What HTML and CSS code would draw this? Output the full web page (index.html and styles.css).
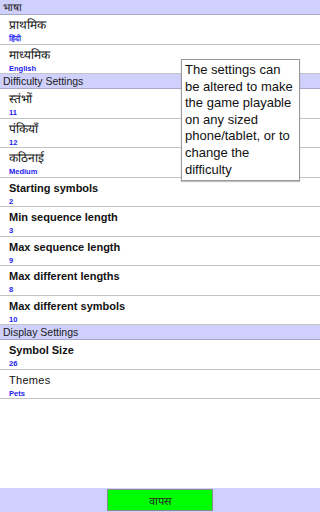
FILE: index.html
```html
<!DOCTYPE html>
<html>
<head>
<meta charset="utf-8">
<link rel="stylesheet" href="styles.css">
</head>
<body>
<div class="screen">
  <div class="list">
    <div class="header">भाषा</div>
    <div class="row"><div class="title dev">प्राथमिक</div><div class="value">हिंदी</div></div>
    <div class="row"><div class="title dev">माध्यमिक</div><div class="value">English</div></div>
    <div class="header">Difficulty Settings</div>
    <div class="row"><div class="title dev">स्तंभों</div><div class="value">11</div></div>
    <div class="row"><div class="title dev">पंकियाँ</div><div class="value">12</div></div>
    <div class="row"><div class="title dev">कठिनाई</div><div class="value">Medium</div></div>
    <div class="row"><div class="title">Starting symbols</div><div class="value">2</div></div>
    <div class="row"><div class="title">Min sequence length</div><div class="value">3</div></div>
    <div class="row"><div class="title">Max sequence length</div><div class="value">9</div></div>
    <div class="row"><div class="title">Max different lengths</div><div class="value">8</div></div>
    <div class="row"><div class="title">Max different symbols</div><div class="value">10</div></div>
    <div class="header">Display Settings</div>
    <div class="row"><div class="title">Symbol Size</div><div class="value">26</div></div>
    <div class="row"><div class="title plain">Themes</div><div class="value">Pets</div></div>
  </div>
  <div class="bottom">
    <button class="back">वापस</button>
  </div>
  <div class="tooltip">The settings can be altered to make the game playable on any sized phone/tablet, or to change the difficulty</div>
</div>
</body>
</html>
```
FILE: styles.css
```css
html, body {
  margin: 0;
  padding: 0;
  background: #ffffff;
}
.screen {
  position: relative;
  width: 320px;
  height: 512px;
  display: flex;
  flex-direction: column;
  font-family: "Liberation Sans", Arial, sans-serif;
  overflow: hidden;
}
.list {
  flex: 1;
  display: flex;
  flex-direction: column;
}
.header {
  height: 14px;
  line-height: 14px;
  background: #d0d0fc;
  border-bottom: 1px solid #a8a8c8;
  font-size: 10.5px;
  color: #1a1a1a;
  padding-left: 3px;
}
.row {
  height: 28.5px;
  box-sizing: content-box;
  border-bottom: 1px solid #c4c4c4;
  padding-left: 9px;
  display: flex;
  flex-direction: column;
}
.title {
  font-size: 11px;
  font-weight: bold;
  line-height: 13px;
  margin-top: 4px;
  color: #111;
}
.title.dev {
  font-weight: normal;
  font-size: 12px;
}
.title.plain {
  font-weight: normal;
  letter-spacing: 0.3px;
}
.value {
  font-size: 7.5px;
  font-weight: bold;
  line-height: 9px;
  margin-top: 2px;
  color: #1c1cf0;
}
.bottom {
  height: 24px;
  background: #d0d0fc;
  display: flex;
  justify-content: center;
  align-items: center;
}
.back {
  width: 106px;
  height: 22px;
  margin: 0 0 0 0;
  background: #00ff00;
  border: 1px solid #8a8a8a;
  font-size: 11px;
  color: #222;
  padding: 0;
  font-family: "Liberation Sans", Arial, sans-serif;
}
.tooltip {
  position: absolute;
  left: 181px;
  top: 59px;
  width: 111px;
  height: 116px;
  padding: 2px 3px;
  background: #ffffff;
  border: 1px solid #9a9a9a;
  box-shadow: 0 1px 1px rgba(0,0,0,0.25);
  font-size: 13px;
  line-height: 16.6px;
  color: #111;
}
```
